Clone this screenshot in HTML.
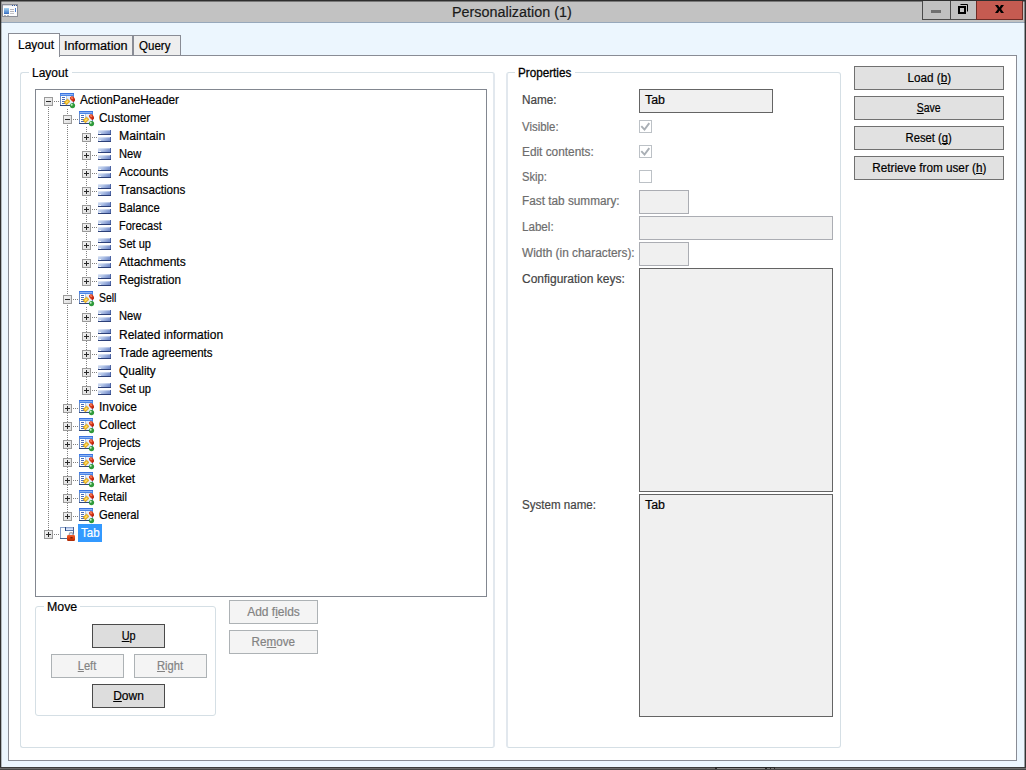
<!DOCTYPE html><html><head><meta charset="utf-8"><title>Personalization (1)</title><style>
html,body{margin:0;padding:0}
body{width:1026px;height:770px;position:relative;overflow:hidden;background:#ecf6fe;font-family:"Liberation Sans",sans-serif;font-size:12px;color:#000;-webkit-text-stroke:0.2px currentColor}
.a{position:absolute;box-sizing:border-box}
.t{position:absolute;white-space:nowrap;line-height:18px;height:18px}
.btn{position:absolute;box-sizing:border-box;border:1px solid #707070;background:#e1e1e1;text-align:center;line-height:22px;height:24px;white-space:nowrap}
.btn.dis{border-color:#adb2b5;background:#f4f4f4;color:#838383}
.btn.def{border:1px solid #4a4a4a;background:#dddddd}
.grp{position:absolute;box-sizing:border-box;border:1px solid #d5dfe5;border-radius:3px}
.gl{position:absolute;background:#fff;white-space:nowrap;line-height:16px;height:16px;padding:0 4px 0 3px}
.inp{position:absolute;box-sizing:border-box;background:#f0f0f0;border:1px solid #abadb3}
.inp.dk{border:1px solid #646464}
.lb{position:absolute;white-space:nowrap;line-height:16px;height:16px;color:#6d6d6d}
.lb.dk{color:#444}
.cb{position:absolute;box-sizing:border-box;width:13px;height:13px;border:1px solid #bcc1c6;background:#fff}
u{text-decoration:underline;text-decoration-skip-ink:none;text-underline-offset:1px;text-decoration-thickness:1px}
</style></head><body>
<svg width="0" height="0" style="position:absolute"><defs>
<linearGradient id="gb" x1="0" y1="0" x2="1" y2="0.35"><stop offset="0" stop-color="#d4dff3"/><stop offset="0.45" stop-color="#b4c6e8"/><stop offset="1" stop-color="#7890cc"/></linearGradient>
<linearGradient id="gx" x1="0" y1="0" x2="1" y2="1"><stop offset="0" stop-color="#f4f4f4"/><stop offset="1" stop-color="#dcdcdc"/></linearGradient>
<linearGradient id="gt" x1="0" y1="0" x2="0" y2="1"><stop offset="0" stop-color="#3f78d8"/><stop offset="1" stop-color="#7aa7ee"/></linearGradient>
<g id="ibar" shape-rendering="crispEdges"><rect x="0" y="0" width="13" height="5" fill="#2c4078"/><rect x="0" y="0" width="13" height="4" fill="url(#gb)"/><rect x="12" y="0" width="1" height="4" fill="#4c64a4"/><rect x="0" y="0" width="12" height="1" fill="#ffffff" fill-opacity="0.35"/><rect x="1" y="3" width="2" height="1" fill="#ffffff" fill-opacity="0.75"/>
<rect x="0" y="7" width="13" height="5" fill="#2c4078"/><rect x="0" y="7" width="13" height="4" fill="url(#gb)"/><rect x="12" y="7" width="1" height="4" fill="#4c64a4"/><rect x="0" y="7" width="12" height="1" fill="#ffffff" fill-opacity="0.35"/><rect x="1" y="10" width="2" height="1" fill="#ffffff" fill-opacity="0.75"/></g>
<g id="igrp">
<g shape-rendering="crispEdges">
<rect x="0" y="0" width="14" height="3" fill="#4a86e8"/>
<rect x="0" y="0" width="14" height="1" fill="#3a74e0"/>
<rect x="1" y="1" width="12" height="1" fill="#8fb4f4"/>
<rect x="0" y="3" width="14" height="10" fill="#6e8cc0"/>
<rect x="1" y="3" width="5" height="9" fill="#ffffff"/>
<rect x="6" y="3" width="1" height="9" fill="#b8c8e0"/>
<rect x="7" y="3" width="6" height="9" fill="#e6eefb"/>
<rect x="0" y="12" width="14" height="1" fill="#2f4678"/>
<rect x="2" y="4" width="3" height="1" fill="#4a6cb8"/><rect x="2" y="6" width="3" height="1" fill="#4a6cb8"/><rect x="2" y="8" width="3" height="1" fill="#4a6cb8"/><rect x="2" y="10" width="3" height="1" fill="#4a6cb8"/>
</g>
<polygon points="4,9.3 7.6,6 10,8.4 6.4,11.9" fill="#f0b820" stroke="#c8900c" stroke-width="0.5"/>
<polygon points="5.6,9.2 7.5,7.4 8.5,8.4 6.6,10.3" fill="#ffe070"/>
<path d="M10 4.3 L12 3.1 L13.7 4 L15 5.7 L14.7 8 L13.1 9.1 L11.4 7.4 L10.1 6 Z" fill="#d83818"/>
<path d="M11 4.6 L12.2 4 L13 5.4 L11.8 6 Z" fill="#ff9a78"/>
<path d="M13.6 6.5 L14.8 6 L14.6 8 L13.2 9 Z" fill="#a81808"/>
<circle cx="12.5" cy="12.6" r="2.6" fill="#2f9a3a"/><circle cx="11.7" cy="11.8" r="1" fill="#c8f0c8"/>
</g>
<linearGradient id="gtt" x1="0" y1="0" x2="0" y2="1"><stop offset="0" stop-color="#b8caf0"/><stop offset="1" stop-color="#e4ecfa"/></linearGradient>
<linearGradient id="glk" x1="0" y1="0" x2="0" y2="1"><stop offset="0" stop-color="#f06030"/><stop offset="0.5" stop-color="#e04010"/><stop offset="1" stop-color="#a82804"/></linearGradient>
<g id="itab">
<g shape-rendering="crispEdges">
<rect x="0" y="1" width="14" height="12" fill="#8ea4cc"/>
<rect x="1" y="2" width="12" height="10" fill="#fdfeff"/>
<rect x="6" y="2" width="7" height="2" fill="url(#gtt)"/>
<rect x="5" y="1" width="1" height="4" fill="#2a4a80"/>
<rect x="6" y="4" width="7" height="1" fill="#5a78b0"/>
<rect x="13" y="1" width="1" height="7" fill="#4a6090"/>
<rect x="0" y="12" width="9" height="1" fill="#4a6490"/>
</g>
<path d="M9.3 9.5 L9.3 8 Q9.3 6.6 11.1 6.6 Q12.9 6.6 12.9 8 L12.9 9.5" fill="#d8e8ff" stroke="#a4a4ae" stroke-width="1.2"/>
<rect x="7" y="9" width="8" height="6" rx="1.2" fill="url(#glk)"/>
<rect x="10.4" y="11.3" width="2.2" height="1" fill="#401000"/>
</g>
</defs></svg>
<div class="a" style="left:0;top:0;width:1026px;height:22px;background:#c2c2c2"></div>
<div class="a" style="left:0;top:22px;width:1026px;height:1px;background:#97a8bb"></div>
<div class="a" style="left:0;top:0;width:1026px;height:1px;background:#2e2e2e"></div>
<div class="a" style="left:0;top:1px;width:1026px;height:1px;background:rgba(46,46,46,0.5)"></div>
<div class="a" style="left:0;top:0;width:1px;height:770px;background:#2e2e2e"></div>
<div class="a" style="left:1px;top:0;width:1px;height:770px;background:rgba(46,46,46,0.3)"></div>
<div class="a" style="left:1025px;top:0;width:1px;height:770px;background:#333"></div>
<div class="a" style="left:1024px;top:0;width:1px;height:770px;background:rgba(46,46,46,0.45)"></div>
<div class="a" style="left:0;top:767px;width:1026px;height:1px;background:#3c3c3c"></div>
<div class="a" style="left:0;top:768px;width:1026px;height:1px;background:#6e6e6e"></div>
<div class="a" style="left:0;top:769px;width:1026px;height:1px;background:#484848"></div>
<div class="a" style="left:715px;top:767px;width:60px;height:2px;background:#2a2a2a"></div>
<div class="a" style="left:717px;top:768px;width:48px;height:1px;background:#8a8a8a"></div>
<div class="a" style="left:767px;top:768px;width:3px;height:1px;background:#7a7a7a"></div>
<div class="a" style="left:771px;top:768px;width:3px;height:1px;background:#7a7a7a"></div>
<svg class="a" style="left:2px;top:4px" width="16" height="13" viewBox="0 0 16 13" shape-rendering="crispEdges"><defs><linearGradient id="gsq" x1="0" y1="0" x2="0" y2="1"><stop offset="0" stop-color="#a6d4f2"/><stop offset="0.8" stop-color="#4f86d0"/><stop offset="1" stop-color="#2f62b4"/></linearGradient></defs><rect x="0.5" y="0.5" width="15" height="12" fill="#fbfbfc" stroke="#8c8e96"/><rect x="1" y="1" width="14" height="1" fill="#d5d9e2"/><rect x="10" y="1" width="1" height="1" fill="#3a5a9a"/><rect x="12" y="1" width="1" height="1" fill="#3a5a9a"/><rect x="14" y="1" width="1" height="1" fill="#3a5a9a"/><rect x="2" y="4" width="5" height="6" fill="url(#gsq)"/><rect x="8" y="5" width="4" height="1" fill="#b4b4ba"/><rect x="8" y="7" width="4" height="1" fill="#b4b4ba"/><rect x="8" y="9" width="4" height="1" fill="#c4c4ca"/><rect x="13" y="4" width="1" height="4" fill="#4a7fd8"/><rect x="2" y="11" width="2" height="1" fill="#b0b4bc"/><rect x="5" y="11" width="2" height="1" fill="#b0b4bc"/></svg>
<div class="t" style="left:451.5px;top:1px;font-size:15.5px;line-height:22px;height:22px;color:#1a1a1a;display:inline-block;transform:scaleX(0.9261);transform-origin:left center;" id="title">Personalization (1)</div>
<div class="a" style="left:922px;top:1px;width:101px;height:19px;border:1px solid #4a4a4a;border-top:none;background:#c1c1c1"></div>
<div class="a" style="left:950px;top:1px;width:1px;height:18px;background:#4a4a4a"></div>
<div class="a" style="left:976px;top:1px;width:47px;height:19px;background:#c55b51;border:1px solid #6e2c26;border-top:none"></div>
<div class="a" style="left:931px;top:10px;width:10px;height:3px;background:#707070"></div>
<svg class="a" style="left:958px;top:4px" width="10" height="10" viewBox="0 0 10 10"><path d="M2.5 0.5 H9.5 V7.5" fill="none" stroke="#000" stroke-width="1"/><rect x="1" y="3" width="6" height="6" fill="none" stroke="#000" stroke-width="2"/></svg>
<svg class="a" style="left:995px;top:5px" width="9" height="8" viewBox="0 0 9 8"><polygon points="0,0 3,0 4.5,2.4 6,0 9,0 6.1,4 9,8 6,8 4.5,5.6 3,8 0,8 2.9,4" fill="#000"/></svg>
<div class="a" style="left:8px;top:55px;width:1009px;height:706px;background:#fff;border:1px solid #898c95"></div>
<div class="a" style="left:60px;top:35px;width:73px;height:21px;background:#eeeeee;border:1px solid #898c95;border-left:none"></div>
<div class="a" style="left:133px;top:35px;width:48px;height:21px;background:#eeeeee;border:1px solid #898c95"></div>
<div class="a" style="left:8px;top:33px;width:52px;height:24px;background:#fff;border:1px solid #898c95;border-bottom:none"></div>
<div class="t" id="tab0" style="left:18px;top:36px;display:inline-block;transform:scaleX(1.0000);transform-origin:left center;">Layout</div>
<div class="t" id="tab1" style="left:64px;top:37px;display:inline-block;transform:scaleX(1.0593);transform-origin:left center;">Information</div>
<div class="t" id="tab2" style="left:139px;top:37px;display:inline-block;transform:scaleX(0.9606);transform-origin:left center;">Query</div>
<div class="grp" style="left:20px;top:72px;width:475px;height:676px;border-right:2px solid #e2e8ee"></div>
<div class="gl" style="left:29px;top:65px"><span id="gl0" style="display:inline-block;transform:scaleX(1.0000);transform-origin:left center;">Layout</span></div>
<div class="a" style="left:35px;top:89px;width:452px;height:508px;background:#fff;border:1px solid #828790"></div>
<svg class="a" style="left:36px;top:90px" width="450" height="506" viewBox="36 90 450 506" shape-rendering="crispEdges"><line x1="48.5" y1="107" x2="48.5" y2="530" stroke="#808080" stroke-width="1" stroke-dasharray="1,1"/><line x1="67.5" y1="109" x2="67.5" y2="512" stroke="#808080" stroke-width="1" stroke-dasharray="1,1"/><line x1="86.5" y1="127" x2="86.5" y2="277" stroke="#808080" stroke-width="1" stroke-dasharray="1,1"/><line x1="86.5" y1="307" x2="86.5" y2="386" stroke="#808080" stroke-width="1" stroke-dasharray="1,1"/><line x1="54" y1="101.5" x2="59" y2="101.5" stroke="#808080" stroke-width="1" stroke-dasharray="1,1"/><rect x="44" y="97" width="9" height="9" fill="url(#gx)"/><rect x="44.5" y="97.5" width="8" height="8" fill="none" stroke="#9a9a9a"/><rect x="46" y="101" width="5" height="1" fill="#2a2a2a"/><line x1="73" y1="119.5" x2="78" y2="119.5" stroke="#808080" stroke-width="1" stroke-dasharray="1,1"/><rect x="63" y="115" width="9" height="9" fill="url(#gx)"/><rect x="63.5" y="115.5" width="8" height="8" fill="none" stroke="#9a9a9a"/><rect x="65" y="119" width="5" height="1" fill="#2a2a2a"/><line x1="92" y1="137.5" x2="97" y2="137.5" stroke="#808080" stroke-width="1" stroke-dasharray="1,1"/><rect x="82" y="133" width="9" height="9" fill="url(#gx)"/><rect x="82.5" y="133.5" width="8" height="8" fill="none" stroke="#9a9a9a"/><rect x="84" y="137" width="5" height="1" fill="#2a2a2a"/><rect x="86" y="135" width="1" height="5" fill="#2a2a2a"/><line x1="92" y1="155.5" x2="97" y2="155.5" stroke="#808080" stroke-width="1" stroke-dasharray="1,1"/><rect x="82" y="151" width="9" height="9" fill="url(#gx)"/><rect x="82.5" y="151.5" width="8" height="8" fill="none" stroke="#9a9a9a"/><rect x="84" y="155" width="5" height="1" fill="#2a2a2a"/><rect x="86" y="153" width="1" height="5" fill="#2a2a2a"/><line x1="92" y1="173.5" x2="97" y2="173.5" stroke="#808080" stroke-width="1" stroke-dasharray="1,1"/><rect x="82" y="169" width="9" height="9" fill="url(#gx)"/><rect x="82.5" y="169.5" width="8" height="8" fill="none" stroke="#9a9a9a"/><rect x="84" y="173" width="5" height="1" fill="#2a2a2a"/><rect x="86" y="171" width="1" height="5" fill="#2a2a2a"/><line x1="92" y1="191.5" x2="97" y2="191.5" stroke="#808080" stroke-width="1" stroke-dasharray="1,1"/><rect x="82" y="187" width="9" height="9" fill="url(#gx)"/><rect x="82.5" y="187.5" width="8" height="8" fill="none" stroke="#9a9a9a"/><rect x="84" y="191" width="5" height="1" fill="#2a2a2a"/><rect x="86" y="189" width="1" height="5" fill="#2a2a2a"/><line x1="92" y1="209.5" x2="97" y2="209.5" stroke="#808080" stroke-width="1" stroke-dasharray="1,1"/><rect x="82" y="205" width="9" height="9" fill="url(#gx)"/><rect x="82.5" y="205.5" width="8" height="8" fill="none" stroke="#9a9a9a"/><rect x="84" y="209" width="5" height="1" fill="#2a2a2a"/><rect x="86" y="207" width="1" height="5" fill="#2a2a2a"/><line x1="92" y1="227.5" x2="97" y2="227.5" stroke="#808080" stroke-width="1" stroke-dasharray="1,1"/><rect x="82" y="223" width="9" height="9" fill="url(#gx)"/><rect x="82.5" y="223.5" width="8" height="8" fill="none" stroke="#9a9a9a"/><rect x="84" y="227" width="5" height="1" fill="#2a2a2a"/><rect x="86" y="225" width="1" height="5" fill="#2a2a2a"/><line x1="92" y1="245.5" x2="97" y2="245.5" stroke="#808080" stroke-width="1" stroke-dasharray="1,1"/><rect x="82" y="241" width="9" height="9" fill="url(#gx)"/><rect x="82.5" y="241.5" width="8" height="8" fill="none" stroke="#9a9a9a"/><rect x="84" y="245" width="5" height="1" fill="#2a2a2a"/><rect x="86" y="243" width="1" height="5" fill="#2a2a2a"/><line x1="92" y1="263.5" x2="97" y2="263.5" stroke="#808080" stroke-width="1" stroke-dasharray="1,1"/><rect x="82" y="259" width="9" height="9" fill="url(#gx)"/><rect x="82.5" y="259.5" width="8" height="8" fill="none" stroke="#9a9a9a"/><rect x="84" y="263" width="5" height="1" fill="#2a2a2a"/><rect x="86" y="261" width="1" height="5" fill="#2a2a2a"/><line x1="92" y1="281.5" x2="97" y2="281.5" stroke="#808080" stroke-width="1" stroke-dasharray="1,1"/><rect x="82" y="277" width="9" height="9" fill="url(#gx)"/><rect x="82.5" y="277.5" width="8" height="8" fill="none" stroke="#9a9a9a"/><rect x="84" y="281" width="5" height="1" fill="#2a2a2a"/><rect x="86" y="279" width="1" height="5" fill="#2a2a2a"/><line x1="73" y1="299.5" x2="78" y2="299.5" stroke="#808080" stroke-width="1" stroke-dasharray="1,1"/><rect x="63" y="295" width="9" height="9" fill="url(#gx)"/><rect x="63.5" y="295.5" width="8" height="8" fill="none" stroke="#9a9a9a"/><rect x="65" y="299" width="5" height="1" fill="#2a2a2a"/><line x1="92" y1="317.5" x2="97" y2="317.5" stroke="#808080" stroke-width="1" stroke-dasharray="1,1"/><rect x="82" y="313" width="9" height="9" fill="url(#gx)"/><rect x="82.5" y="313.5" width="8" height="8" fill="none" stroke="#9a9a9a"/><rect x="84" y="317" width="5" height="1" fill="#2a2a2a"/><rect x="86" y="315" width="1" height="5" fill="#2a2a2a"/><line x1="92" y1="336.5" x2="97" y2="336.5" stroke="#808080" stroke-width="1" stroke-dasharray="1,1"/><rect x="82" y="332" width="9" height="9" fill="url(#gx)"/><rect x="82.5" y="332.5" width="8" height="8" fill="none" stroke="#9a9a9a"/><rect x="84" y="336" width="5" height="1" fill="#2a2a2a"/><rect x="86" y="334" width="1" height="5" fill="#2a2a2a"/><line x1="92" y1="354.5" x2="97" y2="354.5" stroke="#808080" stroke-width="1" stroke-dasharray="1,1"/><rect x="82" y="350" width="9" height="9" fill="url(#gx)"/><rect x="82.5" y="350.5" width="8" height="8" fill="none" stroke="#9a9a9a"/><rect x="84" y="354" width="5" height="1" fill="#2a2a2a"/><rect x="86" y="352" width="1" height="5" fill="#2a2a2a"/><line x1="92" y1="372.5" x2="97" y2="372.5" stroke="#808080" stroke-width="1" stroke-dasharray="1,1"/><rect x="82" y="368" width="9" height="9" fill="url(#gx)"/><rect x="82.5" y="368.5" width="8" height="8" fill="none" stroke="#9a9a9a"/><rect x="84" y="372" width="5" height="1" fill="#2a2a2a"/><rect x="86" y="370" width="1" height="5" fill="#2a2a2a"/><line x1="92" y1="390.5" x2="97" y2="390.5" stroke="#808080" stroke-width="1" stroke-dasharray="1,1"/><rect x="82" y="386" width="9" height="9" fill="url(#gx)"/><rect x="82.5" y="386.5" width="8" height="8" fill="none" stroke="#9a9a9a"/><rect x="84" y="390" width="5" height="1" fill="#2a2a2a"/><rect x="86" y="388" width="1" height="5" fill="#2a2a2a"/><line x1="73" y1="408.5" x2="78" y2="408.5" stroke="#808080" stroke-width="1" stroke-dasharray="1,1"/><rect x="63" y="404" width="9" height="9" fill="url(#gx)"/><rect x="63.5" y="404.5" width="8" height="8" fill="none" stroke="#9a9a9a"/><rect x="65" y="408" width="5" height="1" fill="#2a2a2a"/><rect x="67" y="406" width="1" height="5" fill="#2a2a2a"/><line x1="73" y1="426.5" x2="78" y2="426.5" stroke="#808080" stroke-width="1" stroke-dasharray="1,1"/><rect x="63" y="422" width="9" height="9" fill="url(#gx)"/><rect x="63.5" y="422.5" width="8" height="8" fill="none" stroke="#9a9a9a"/><rect x="65" y="426" width="5" height="1" fill="#2a2a2a"/><rect x="67" y="424" width="1" height="5" fill="#2a2a2a"/><line x1="73" y1="444.5" x2="78" y2="444.5" stroke="#808080" stroke-width="1" stroke-dasharray="1,1"/><rect x="63" y="440" width="9" height="9" fill="url(#gx)"/><rect x="63.5" y="440.5" width="8" height="8" fill="none" stroke="#9a9a9a"/><rect x="65" y="444" width="5" height="1" fill="#2a2a2a"/><rect x="67" y="442" width="1" height="5" fill="#2a2a2a"/><line x1="73" y1="462.5" x2="78" y2="462.5" stroke="#808080" stroke-width="1" stroke-dasharray="1,1"/><rect x="63" y="458" width="9" height="9" fill="url(#gx)"/><rect x="63.5" y="458.5" width="8" height="8" fill="none" stroke="#9a9a9a"/><rect x="65" y="462" width="5" height="1" fill="#2a2a2a"/><rect x="67" y="460" width="1" height="5" fill="#2a2a2a"/><line x1="73" y1="480.5" x2="78" y2="480.5" stroke="#808080" stroke-width="1" stroke-dasharray="1,1"/><rect x="63" y="476" width="9" height="9" fill="url(#gx)"/><rect x="63.5" y="476.5" width="8" height="8" fill="none" stroke="#9a9a9a"/><rect x="65" y="480" width="5" height="1" fill="#2a2a2a"/><rect x="67" y="478" width="1" height="5" fill="#2a2a2a"/><line x1="73" y1="498.5" x2="78" y2="498.5" stroke="#808080" stroke-width="1" stroke-dasharray="1,1"/><rect x="63" y="494" width="9" height="9" fill="url(#gx)"/><rect x="63.5" y="494.5" width="8" height="8" fill="none" stroke="#9a9a9a"/><rect x="65" y="498" width="5" height="1" fill="#2a2a2a"/><rect x="67" y="496" width="1" height="5" fill="#2a2a2a"/><line x1="73" y1="516.5" x2="78" y2="516.5" stroke="#808080" stroke-width="1" stroke-dasharray="1,1"/><rect x="63" y="512" width="9" height="9" fill="url(#gx)"/><rect x="63.5" y="512.5" width="8" height="8" fill="none" stroke="#9a9a9a"/><rect x="65" y="516" width="5" height="1" fill="#2a2a2a"/><rect x="67" y="514" width="1" height="5" fill="#2a2a2a"/><line x1="54" y1="534.5" x2="59" y2="534.5" stroke="#808080" stroke-width="1" stroke-dasharray="1,1"/><rect x="44" y="530" width="9" height="9" fill="url(#gx)"/><rect x="44.5" y="530.5" width="8" height="8" fill="none" stroke="#9a9a9a"/><rect x="46" y="534" width="5" height="1" fill="#2a2a2a"/><rect x="48" y="532" width="1" height="5" fill="#2a2a2a"/></svg>
<svg class="a" style="left:60px;top:93px" width="16" height="16"><use href="#igrp"/></svg>
<div class="t" id="r0" style="left:80px;top:91px;font-size:12.75px;display:inline-block;transform:scaleX(0.9244);transform-origin:left center;">ActionPaneHeader</div>
<svg class="a" style="left:79px;top:111px" width="16" height="16"><use href="#igrp"/></svg>
<div class="t" id="r1" style="left:99px;top:109px;font-size:12.75px;display:inline-block;transform:scaleX(0.9284);transform-origin:left center;">Customer</div>
<svg class="a" style="left:98px;top:130px" width="16" height="16"><use href="#ibar"/></svg>
<div class="t" id="r2" style="left:119px;top:127px;font-size:12.75px;display:inline-block;transform:scaleX(0.9600);transform-origin:left center;">Maintain</div>
<svg class="a" style="left:98px;top:148px" width="16" height="16"><use href="#ibar"/></svg>
<div class="t" id="r3" style="left:119px;top:145px;font-size:12.75px;display:inline-block;transform:scaleX(0.8753);transform-origin:left center;">New</div>
<svg class="a" style="left:98px;top:166px" width="16" height="16"><use href="#ibar"/></svg>
<div class="t" id="r4" style="left:119px;top:163px;font-size:12.75px;display:inline-block;transform:scaleX(0.9412);transform-origin:left center;">Accounts</div>
<svg class="a" style="left:98px;top:184px" width="16" height="16"><use href="#ibar"/></svg>
<div class="t" id="r5" style="left:119px;top:181px;font-size:12.75px;display:inline-block;transform:scaleX(0.9163);transform-origin:left center;">Transactions</div>
<svg class="a" style="left:98px;top:202px" width="16" height="16"><use href="#ibar"/></svg>
<div class="t" id="r6" style="left:119px;top:199px;font-size:12.75px;display:inline-block;transform:scaleX(0.8842);transform-origin:left center;">Balance</div>
<svg class="a" style="left:98px;top:220px" width="16" height="16"><use href="#ibar"/></svg>
<div class="t" id="r7" style="left:119px;top:217px;font-size:12.75px;display:inline-block;transform:scaleX(0.8611);transform-origin:left center;">Forecast</div>
<svg class="a" style="left:98px;top:238px" width="16" height="16"><use href="#ibar"/></svg>
<div class="t" id="r8" style="left:119px;top:235px;font-size:12.75px;display:inline-block;transform:scaleX(0.8686);transform-origin:left center;">Set up</div>
<svg class="a" style="left:98px;top:256px" width="16" height="16"><use href="#ibar"/></svg>
<div class="t" id="r9" style="left:119px;top:253px;font-size:12.75px;display:inline-block;transform:scaleX(0.9412);transform-origin:left center;">Attachments</div>
<svg class="a" style="left:98px;top:274px" width="16" height="16"><use href="#ibar"/></svg>
<div class="t" id="r10" style="left:119px;top:271px;font-size:12.75px;display:inline-block;transform:scaleX(0.9118);transform-origin:left center;">Registration</div>
<svg class="a" style="left:79px;top:291px" width="16" height="16"><use href="#igrp"/></svg>
<div class="t" id="r11" style="left:99px;top:289px;font-size:12.75px;display:inline-block;transform:scaleX(0.8188);transform-origin:left center;">Sell</div>
<svg class="a" style="left:98px;top:310px" width="16" height="16"><use href="#ibar"/></svg>
<div class="t" id="r12" style="left:119px;top:307px;font-size:12.75px;display:inline-block;transform:scaleX(0.8753);transform-origin:left center;">New</div>
<svg class="a" style="left:98px;top:329px" width="16" height="16"><use href="#ibar"/></svg>
<div class="t" id="r13" style="left:119px;top:326px;font-size:12.75px;display:inline-block;transform:scaleX(0.9412);transform-origin:left center;">Related information</div>
<svg class="a" style="left:98px;top:347px" width="16" height="16"><use href="#ibar"/></svg>
<div class="t" id="r14" style="left:119px;top:344px;font-size:12.75px;display:inline-block;transform:scaleX(0.9019);transform-origin:left center;">Trade agreements</div>
<svg class="a" style="left:98px;top:365px" width="16" height="16"><use href="#ibar"/></svg>
<div class="t" id="r15" style="left:119px;top:362px;font-size:12.75px;display:inline-block;transform:scaleX(0.9238);transform-origin:left center;">Quality</div>
<svg class="a" style="left:98px;top:383px" width="16" height="16"><use href="#ibar"/></svg>
<div class="t" id="r16" style="left:119px;top:380px;font-size:12.75px;display:inline-block;transform:scaleX(0.8686);transform-origin:left center;">Set up</div>
<svg class="a" style="left:79px;top:400px" width="16" height="16"><use href="#igrp"/></svg>
<div class="t" id="r17" style="left:99px;top:398px;font-size:12.75px;display:inline-block;transform:scaleX(0.9412);transform-origin:left center;">Invoice</div>
<svg class="a" style="left:79px;top:418px" width="16" height="16"><use href="#igrp"/></svg>
<div class="t" id="r18" style="left:99px;top:416px;font-size:12.75px;display:inline-block;transform:scaleX(0.9412);transform-origin:left center;">Collect</div>
<svg class="a" style="left:79px;top:436px" width="16" height="16"><use href="#igrp"/></svg>
<div class="t" id="r19" style="left:99px;top:434px;font-size:12.75px;display:inline-block;transform:scaleX(0.9040);transform-origin:left center;">Projects</div>
<svg class="a" style="left:79px;top:454px" width="16" height="16"><use href="#igrp"/></svg>
<div class="t" id="r20" style="left:99px;top:452px;font-size:12.75px;display:inline-block;transform:scaleX(0.8635);transform-origin:left center;">Service</div>
<svg class="a" style="left:79px;top:472px" width="16" height="16"><use href="#igrp"/></svg>
<div class="t" id="r21" style="left:99px;top:470px;font-size:12.75px;display:inline-block;transform:scaleX(0.9234);transform-origin:left center;">Market</div>
<svg class="a" style="left:79px;top:490px" width="16" height="16"><use href="#igrp"/></svg>
<div class="t" id="r22" style="left:99px;top:488px;font-size:12.75px;display:inline-block;transform:scaleX(0.8565);transform-origin:left center;">Retail</div>
<svg class="a" style="left:79px;top:508px" width="16" height="16"><use href="#igrp"/></svg>
<div class="t" id="r23" style="left:99px;top:506px;font-size:12.75px;display:inline-block;transform:scaleX(0.8807);transform-origin:left center;">General</div>
<svg class="a" style="left:60px;top:526px" width="16" height="16"><use href="#itab"/></svg>
<div class="a" style="left:78px;top:524px;width:24px;height:18px;background:#3399ff"></div>
<div class="t" id="r24" style="left:81px;top:524px;font-size:12.75px;color:#fff;display:inline-block;transform:scaleX(0.9066);transform-origin:left center;">Tab</div>
<div class="grp" style="left:35px;top:606px;width:181px;height:110px"></div>
<div class="gl" style="left:44px;top:599px"><span id="gl1" style="display:inline-block;transform:scaleX(1.0300);transform-origin:left center;">Move</span></div>
<div class="btn def" style="left:92px;top:624px;width:73px"><span id="b_up" style="display:inline-block;transform:scaleX(0.9063);transform-origin:center center;"><u>U</u>p</span></div>
<div class="btn dis" style="left:51px;top:654px;width:73px"><span id="b_left" style="display:inline-block;transform:scaleX(0.9286);transform-origin:center center;"><u>L</u>eft</span></div>
<div class="btn dis" style="left:134px;top:654px;width:73px"><span id="b_right" style="display:inline-block;transform:scaleX(0.9310);transform-origin:center center;"><u>R</u>ight</span></div>
<div class="btn def" style="left:92px;top:684px;width:73px"><span id="b_down" style="display:inline-block;transform:scaleX(1.0000);transform-origin:center center;"><u>D</u>own</span></div>
<div class="btn dis" style="left:229px;top:600px;width:89px"><span id="b_add" style="display:inline-block;transform:scaleX(1.0000);transform-origin:center center;">Add f<u>i</u>elds</span></div>
<div class="btn dis" style="left:229px;top:630px;width:89px"><span id="b_rem" style="display:inline-block;transform:scaleX(0.9727);transform-origin:center center;">Re<u>m</u>ove</span></div>
<div class="grp" style="left:506px;top:72px;width:335px;height:676px;border-left:2px solid #e2e8ee"></div>
<div class="gl" style="left:515px;top:65px;padding-right:2px"><span id="gl2" style="-webkit-text-stroke:0.3px currentColor;display:inline-block;transform:scaleX(0.9736);transform-origin:left center;">Properties</span></div>
<div class="lb dk" id="l_name" style="left:522px;top:92px;display:inline-block;transform:scaleX(0.9771);transform-origin:left center;">Name:</div>
<div class="lb" id="l_vis" style="left:522px;top:119px;display:inline-block;transform:scaleX(0.9500);transform-origin:left center;">Visible:</div>
<div class="lb" id="l_edit" style="left:521.6px;top:144px;display:inline-block;transform:scaleX(0.9870);transform-origin:left center;">Edit contents:</div>
<div class="lb" id="l_skip" style="left:522px;top:169px;display:inline-block;transform:scaleX(0.9308);transform-origin:left center;">Skip:</div>
<div class="lb" id="l_fast" style="left:521.6px;top:193px;display:inline-block;transform:scaleX(0.9827);transform-origin:left center;">Fast tab summary:</div>
<div class="lb" id="l_label" style="left:521.6px;top:219px;display:inline-block;transform:scaleX(0.9677);transform-origin:left center;">Label:</div>
<div class="lb" id="l_width" style="left:522px;top:245px;display:inline-block;transform:scaleX(0.9880);transform-origin:left center;">Width (in characters):</div>
<div class="lb dk" id="l_conf" style="left:522px;top:271px;display:inline-block;transform:scaleX(1.0000);transform-origin:left center;">Configuration keys:</div>
<div class="lb dk" id="l_sys" style="left:522px;top:497px;display:inline-block;transform:scaleX(0.9645);transform-origin:left center;">System name:</div>
<div class="inp dk" style="left:639px;top:89px;width:134px;height:24px"></div>
<div class="t" id="v_name" style="left:645.4px;top:91px;display:inline-block;transform:scaleX(1.0300);transform-origin:left center;">Tab</div>
<div class="cb" style="left:639px;top:120px"><svg width="11" height="11" viewBox="0 0 11 11" style="position:absolute;left:0;top:0"><path d="M1.3 5.2 L4.5 8.6 L9.3 2.1" fill="none" stroke="#a9afb5" stroke-width="1.9"/></svg></div>
<div class="cb" style="left:639px;top:145px"><svg width="11" height="11" viewBox="0 0 11 11" style="position:absolute;left:0;top:0"><path d="M1.3 5.2 L4.5 8.6 L9.3 2.1" fill="none" stroke="#a9afb5" stroke-width="1.9"/></svg></div>
<div class="cb" style="left:639px;top:170px;border-color:#bcc1c6"></div>
<div class="inp" style="left:639px;top:190px;width:50px;height:24px"></div>
<div class="inp" style="left:639px;top:216px;width:194px;height:24px"></div>
<div class="inp" style="left:639px;top:242px;width:50px;height:24px"></div>
<div class="inp dk" style="left:639px;top:268px;width:194px;height:224px"></div>
<div class="inp dk" style="left:639px;top:494px;width:194px;height:223px"></div>
<div class="t" id="v_sys" style="left:645.4px;top:496px;display:inline-block;transform:scaleX(1.0300);transform-origin:left center;">Tab</div>
<div class="btn" style="left:854px;top:66px;width:150px"><span id="b_load" style="display:inline-block;transform:scaleX(0.9750);transform-origin:center center;">Load (<u>b</u>)</span></div>
<div class="btn" style="left:854px;top:96px;width:150px"><span id="b_save" style="display:inline-block;transform:scaleX(0.8750);transform-origin:center center;"><u>S</u>ave</span></div>
<div class="btn" style="left:854px;top:126px;width:150px"><span id="b_reset" style="display:inline-block;transform:scaleX(0.9375);transform-origin:center center;">Reset (<u>g</u>)</span></div>
<div class="btn" style="left:854px;top:156px;width:150px"><span id="b_ret" style="display:inline-block;transform:scaleX(0.9776);transform-origin:center center;">Retrieve from user (<u>h</u>)</span></div>
</body></html>
